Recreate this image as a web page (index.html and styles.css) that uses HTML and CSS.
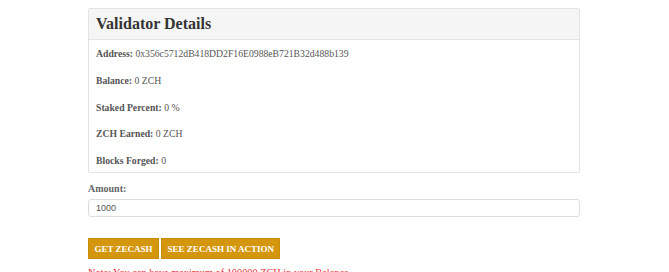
FILE: index.html
```html
<!DOCTYPE html>
<html>
<head>
<meta charset="utf-8">
<link rel="stylesheet" href="styles.css">
</head>
<body>
<div class="wrap">
  <div class="panel">
    <div class="panel-head"><h3>Validator Details</h3></div>
    <div class="panel-body">
      <p><b>Address:</b> 0x356c5712dB418DD2F16E0988eB721B32d488b139</p>
      <p><b>Balance:</b> 0 ZCH</p>
      <p><b>Staked Percent:</b> 0 %</p>
      <p><b>ZCH Earned:</b> 0 ZCH</p>
      <p><b>Blocks Forged:</b> 0</p>
    </div>
  </div>
  <label class="lbl">Amount:</label>
  <input class="inp" type="text" value="1000">
  <div class="btns">
    <button class="btn">GET ZECASH</button>
    <button class="btn">SEE ZECASH IN ACTION</button>
  </div>
  <p class="note">Note: You can have maximum of 100000 ZCH in your Balance</p>
</div>
</body>
</html>
```
FILE: styles.css
```css
html, body { margin: 0; padding: 0; background: #fff; }
body { font-family: "Liberation Serif", serif; color: #555; overflow: hidden; height: 272px; }
.wrap { width: 492px; margin-left: 88px; padding-top: 8px; }
.panel { border: 1px solid #e3e3e3; border-radius: 2px; }
.panel-head { background: #f5f5f5; border-bottom: 1px solid #e3e3e3; height: 30px; display: flex; align-items: center; padding-left: 7px; }
.panel-head h3 { margin: 0; font-family: "Liberation Serif", serif; font-size: 16px; font-weight: bold; color: #333; }
.panel-body { padding: 8px 7px 5px; }
.panel-body p { margin: 0; height: 26.75px; font-size: 9.7px; line-height: 12px; }
.panel-body p:last-child { height: 12px; }
.panel-body b { color: #555; }
.lbl { display: block; margin-top: 10px; font-size: 10px; font-weight: bold; color: #666; line-height: 12px; }
.inp { display: block; box-sizing: border-box; width: 492px; height: 18px; margin-top: 4px; border: 1px solid #ddd; border-radius: 3px; padding: 0 7px; font-family: "Liberation Sans", sans-serif; font-size: 9px; color: #555; outline: none; }
.btns { display: flex; gap: 2px; margin-top: 21px; }
.btn { background: #d4960c; color: #fff; border: 1px solid #c88c08; height: 21px; padding: 0 5.5px; font-family: "Liberation Serif", serif; font-weight: bold; font-size: 9px; }
.note { margin: 8px 0 0; color: #e8323a; font-size: 10.3px; line-height: 12px; }
```
